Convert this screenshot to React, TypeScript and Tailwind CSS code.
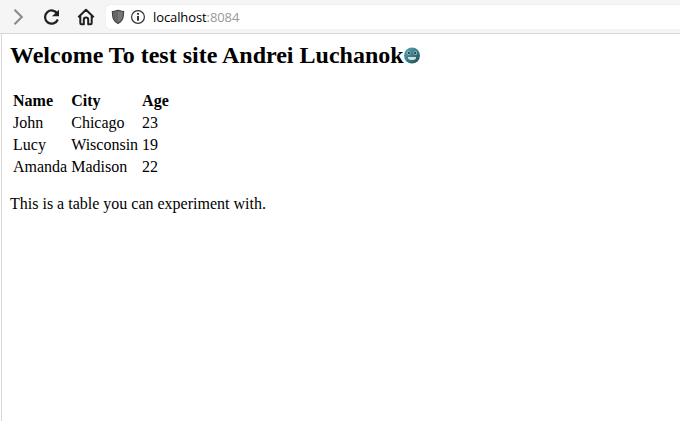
export default function App() {
  const rows = [["John", "Chicago", "23"], ["Lucy", "Wisconsin", "19"], ["Amanda", "Madison", "22"]];
  return (
    <div className="flex h-[421px] w-[680px] flex-col overflow-hidden bg-white">
      <header className="flex h-[34px] shrink-0 items-center border-b border-[#d8d8d8] bg-[#f5f5f5]">
        <svg className="ml-2 h-[33px] w-[98px] shrink-0" viewBox="8 0 98 33" fill="none">
          <path d="M14.500 9.700 21.800 17l-7.300 7.300" stroke="#8b8b8b" strokeWidth="2.100" />
          <path d="M57.500 14A6.600 6.600 0 1 0 57.800 19.500" stroke="#202020" strokeWidth="2.200" />
          <path d="M59 9.800v6.500h-7z" fill="#202020" />
          <path d="M78.300 17.200 86 9.700l7.700 7.500M80.300 16v7c0 .8.200 1.200 1 1.200h2.500v-4.400a2.200 2.200 0 0 1 4.400 0v4.400h2.500c.8 0 1-.4 1-1.200v-7" stroke="#202020" strokeWidth="2" strokeLinejoin="round" />
        </svg>
        <div className="flex h-[24px] flex-1 items-center rounded-l bg-white shadow-[0_0_1px_#ccc]">
          <svg className="h-[24px] w-[47px]" viewBox="106 5 47 24" fill="none">
            <path d="M118 10.300c2 .9 3.500 1.200 5.600 1.200 0 6-.8 9.300-5.600 12-4.800-2.700-5.600-6-5.600-12 2.100 0 3.600-.3 5.600-1.200z" fill="#777" stroke="#444" strokeWidth="1.200" />
            <path d="M118 11v11.700c-4-2.400-4.800-5.200-4.900-10.500 1.900-.1 3.200-.4 4.900-1.200z" fill="#666" />
            <circle cx="138" cy="17" r="6.400" stroke="#333" strokeWidth="1.200" />
            <path d="M138 16v4.700M138 13v1.700" stroke="#222" strokeWidth="1.800" />
          </svg>
          <span className="pt-[2px] font-['Open_Sans',sans-serif] text-[13px] tracking-[-0.1px] text-black">localhost<span className="text-[#999]">:8084</span></span>
        </div>
      </header>
      <main className="ml-px flex-1 border-l border-[#d8d8d8] pl-2 font-['Liberation_Serif',serif] text-[16px] leading-[18px] text-black">
        <h2 className="mt-[7px] flex h-[28px] items-center text-[24px] font-bold leading-[28px]">Welcome To test site Andrei Luchanok
          <svg width="17" height="17" viewBox="0 0 17 17">
            <defs><linearGradient id="face" x1="0" y1="0" x2="1" y2="1"><stop stopColor="#65a9b5" /><stop offset=".5" stopColor="#397d89" /><stop offset="1" stopColor="#23444d" /></linearGradient></defs>
            <circle cx="8" cy="8.500" r="8" fill="url(#face)" />
            <circle cx="4.700" cy="6" r="1.900" fill="#8bb5bc" /><circle cx="11.300" cy="6" r="1.900" fill="#8bb5bc" />
            <circle cx="4.900" cy="6" r="1" fill="#142e35" /><circle cx="11.100" cy="6" r="1" fill="#142e35" />
            <path d="M4 10h8v1.500c-1 1.200-2.500 1.500-4 1.500s-3-.3-4-1.500z" fill="#d5dddf" />
          </svg>
        </h2>
        <table className="mt-[20px] border-separate border-spacing-[2px]">
          <thead><tr>{["Name", "City", "Age"].map((x) => <th key={x} className="h-5 p-px text-left">{x}</th>)}</tr></thead>
          <tbody>{rows.map((r) => <tr key={r[0]}>{r.map((x) => <td key={x} className="h-5 p-px">{x}</td>)}</tr>)}</tbody>
        </table>
        <p className="mt-4">This is a table you can experiment with.</p>
      </main>
    </div>
  );
}
